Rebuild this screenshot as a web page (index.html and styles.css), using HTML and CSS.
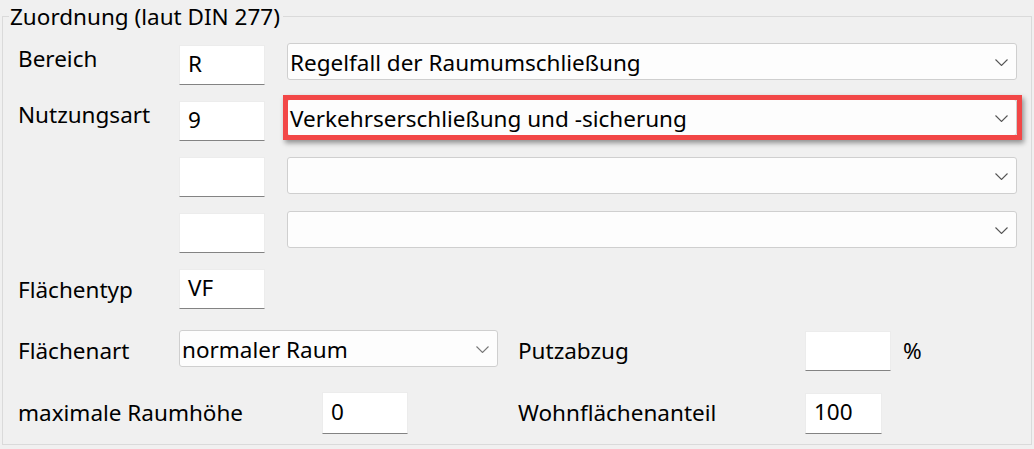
FILE: index.html
```html
<!DOCTYPE html>
<html lang="de">
<head>
  <meta charset="utf-8" />
  <title>Zuordnung</title>
  <link rel="stylesheet" href="styles.css">
</head>

<body>
  <!-- Gruppe Zuordnung -->
  <fieldset class="group">
    <legend>Zuordnung (laut DIN 277)</legend>

    <div class="top-grid">
      <div class="label label-top">Bereich</div>
      <div class="textbox">R</div>
      <div class="combo">
        <span class="combo-text">Regelfall der Raumumschließung</span>
        <svg class="chevron" viewBox="0 0 13 7"><polyline points="0.5,0.5 6.5,6.5 12.5,0.5" /></svg>
      </div>

      <div class="label label-top">Nutzungsart</div>
      <div class="textbox">9</div>
      <div class="combo marked">
        <span class="combo-text">Verkehrserschließung und -sicherung</span>
        <svg class="chevron" viewBox="0 0 13 7"><polyline points="0.5,0.5 6.5,6.5 12.5,0.5" /></svg>
      </div>

      <div class="label"></div>
      <div class="textbox"></div>
      <div class="combo combo-low">
        <span class="combo-text"></span>
        <svg class="chevron" viewBox="0 0 13 7"><polyline points="0.5,0.5 6.5,6.5 12.5,0.5" /></svg>
      </div>

      <div class="label"></div>
      <div class="textbox"></div>
      <div class="combo">
        <span class="combo-text"></span>
        <svg class="chevron" viewBox="0 0 13 7"><polyline points="0.5,0.5 6.5,6.5 12.5,0.5" /></svg>
      </div>

      <div class="label">Flächentyp</div>
      <div class="textbox">VF</div>
    </div>

    <div class="bottom-grid">
      <div class="label">Flächenart</div>
      <div class="combo combo-small">
        <span class="combo-text">normaler Raum</span>
        <svg class="chevron light" viewBox="0 0 13 7"><polyline points="0.5,0.5 6.5,6.5 12.5,0.5" /></svg>
      </div>
      <div class="label col-right">Putzabzug</div>
      <div class="textbox box-right"></div>
      <div class="label unit">%</div>

      <div class="label label-wide">maximale Raumhöhe</div>
      <div class="textbox box-height">0</div>
      <div class="label col-right">Wohnflächenanteil</div>
      <div class="textbox box-right box-narrow">100</div>
    </div>
  </fieldset>
</body>
</html>
```

FILE: styles.css
```css
* {
  margin: 0;
  padding: 0;
  box-sizing: border-box;
}

body {
  background-color: #f0f0f0;
  font-family: "Noto Sans", "Open Sans", sans-serif;
  font-size: 22.5px;
  color: #000;
  width: 1034px;
  height: 449px;
  overflow: hidden;
}

/* Gruppenrahmen */
.group {
  margin: 0 2px;
  border: 1px solid #dadada;
  padding: 13px 0 10px 15px;
}
.group legend {
  margin-left: -9px;
  padding: 0 3px 0 1px;
  line-height: 32px;
  position: relative;
  top: 1px;
}

.label {
  line-height: 27px;
  padding-top: 7px;
  white-space: nowrap;
}
.label-top {
  padding-top: 0;
}

.textbox {
  width: 86px;
  height: 40px;
  background: #fff;
  border: 1px solid #ececec;
  border-bottom-color: #838383;
  padding: 4px 0 0 8px;
  line-height: 27px;
}

.combo {
  position: relative;
  height: 37px;
  background: #fdfdfd;
  border: 1px solid #cfcfcf;
  border-radius: 3px;
  padding: 5px 0 0 2px;
  line-height: 27px;
  white-space: nowrap;
}
.combo .chevron {
  position: absolute;
  right: 8px;
  top: 15px;
  width: 13px;
  height: 7px;
  fill: none;
  stroke: #555;
  stroke-width: 1.1;
}
.combo .chevron.light {
  stroke: #777;
}

/* rote Markierung */
.combo.marked::after {
  content: "";
  position: absolute;
  left: -5px;
  top: -5px;
  right: -6px;
  bottom: -5px;
  border: 5px solid #f24747;
  box-shadow: 2px 3px 5px rgba(0, 0, 0, 0.4);
}

/* obere Zeilen */
.top-grid {
  display: grid;
  grid-template-columns: 161px 108px 730px;
  grid-auto-rows: 40px;
  row-gap: 16px;
}
.top-grid .combo {
  margin-top: -2px;
}
.top-grid .combo.combo-low {
  margin-top: 0;
}

/* untere Zeilen */
.bottom-grid {
  margin-top: 21px;
  display: grid;
  grid-template-columns: 161px 143px 86px 110px 287px 86px auto;
  grid-template-rows: 41px 42px;
  row-gap: 21px;
}
.bottom-grid .combo-small {
  grid-column: 2 / 5;
  width: 319px;
  height: 37px;
}
.bottom-grid .col-right {
  grid-column: 5;
}
.bottom-grid .box-right {
  grid-column: 6;
  margin-top: 1px;
}
.bottom-grid .unit {
  padding-left: 12px;
  padding-top: 7px;
}
.bottom-grid .label-wide {
  grid-column: 1 / 3;
}
.bottom-grid .box-height {
  grid-column: 3;
  height: 42px;
  padding-top: 5px;
}
.bottom-grid .box-narrow {
  width: 77px;
  height: 41px;
  margin-top: 1px;
}
```
